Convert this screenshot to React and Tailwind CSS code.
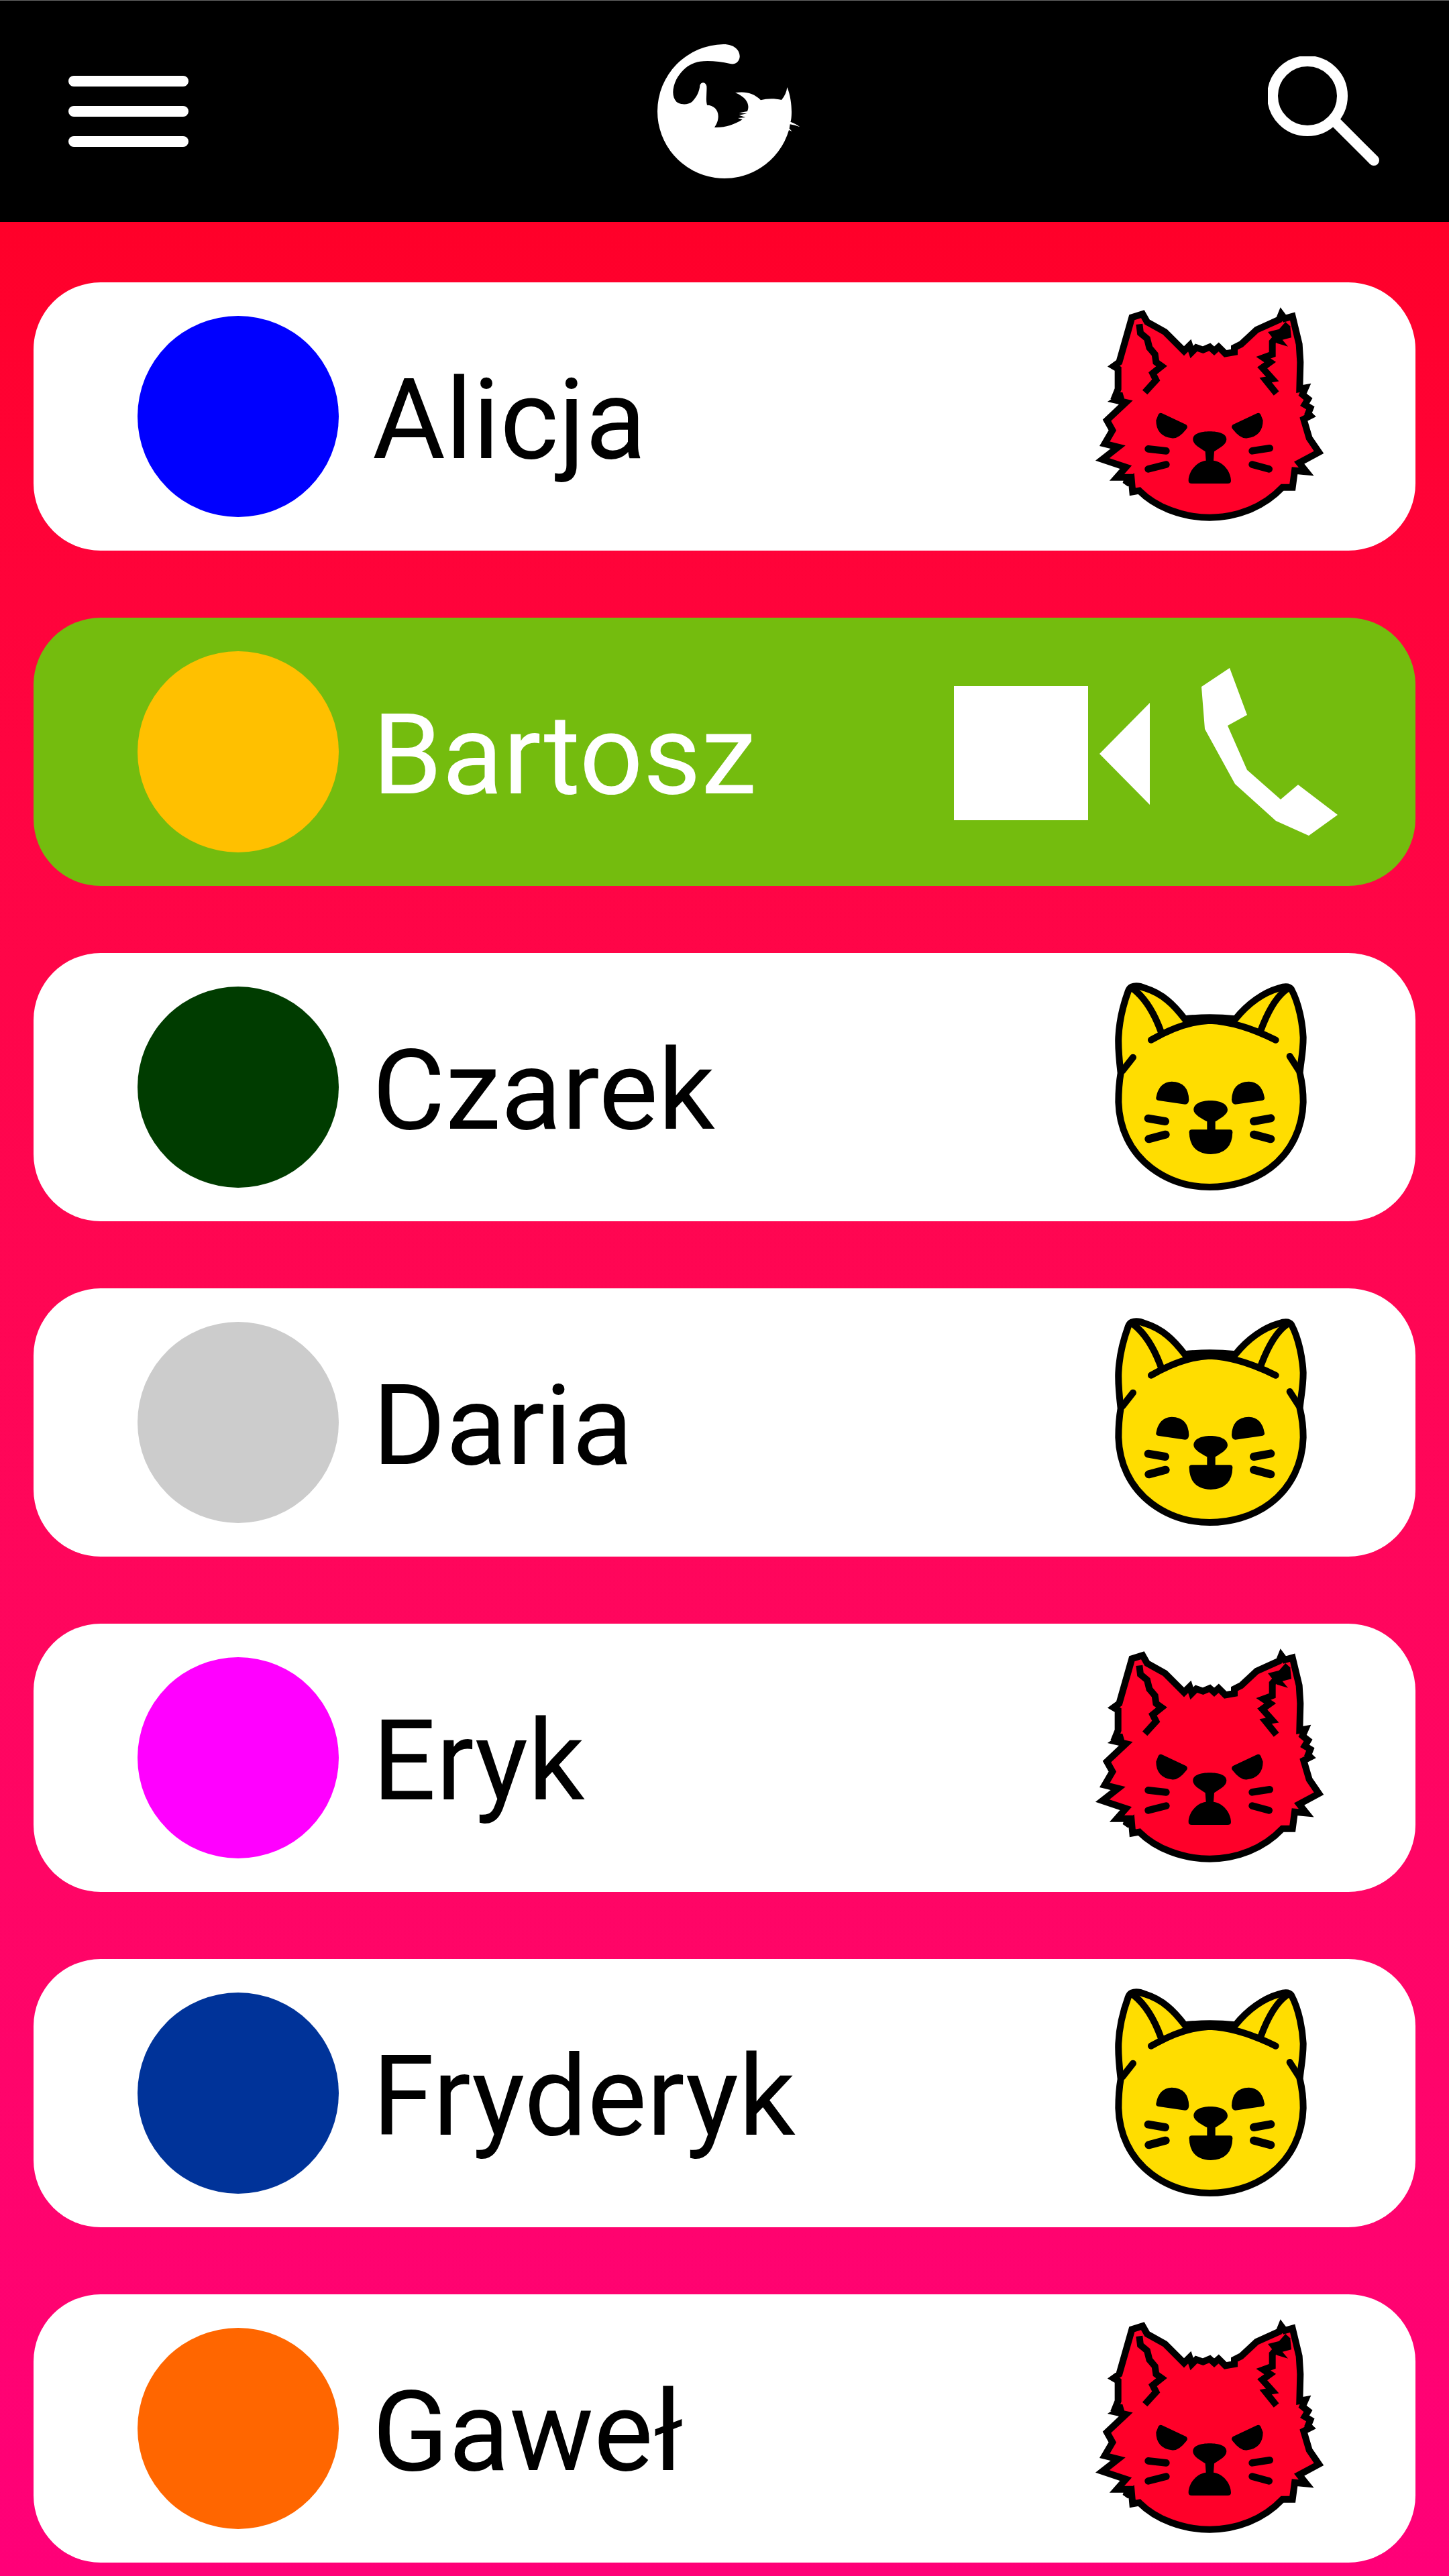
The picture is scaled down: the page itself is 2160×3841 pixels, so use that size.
const ROBOTO = "font-['Roboto',sans-serif]"

function Logo() {
  return (
    <svg viewBox="0 0 780 720" className="w-[260px] h-[240px] mb-[12px] mr-[11px] fill-white">
      <path d="M385 78C440 78 460 110 458 135C455 160 435 170 415 165C370 155 320 150 280 155C235 162 200 190 175 235C155 275 155 315 175 335C195 350 225 350 245 335C265 315 278 290 280 262C285 245 305 245 310 265C312 295 305 325 312 350C340 350 362 370 362 400C362 420 355 435 345 450C390 452 430 440 470 415L450 408L484 405L455 395L490 388L455 385L492 378C505 350 490 315 438 295C480 288 520 295 552 328C580 320 615 320 645 327C660 310 668 290 670 270C685 305 690 350 690 380C690 400 688 420 685 425C700 430 715 438 727 448C712 442 698 438 683 436L680 455L692 468L678 462A300 300 0 0 1 90 378A300 300 0 0 1 385 78Z" />
    </svg>
  )
}

function AngryCat() {
  return (
    <svg viewBox="0 0 1140 1080" className="ml-auto mr-[120px] mb-[2px] w-[380px] h-[360px] shrink-0">
      <path
        d="M232 100L280 85L300 120L380 165L465 250L490 225L500 255L520 235L550 245L580 232L600 250L620 232L650 262L690 255L690 235L720 220L790 155L890 110L900 85L915 105L950 95L980 220L985 300L982 420L1008 415L995 445L1020 465L1005 490L1030 505L1020 530L1030 540L1000 555L1025 640L1068 703L980 750L1012 790L960 785L950 860L905 860C820 950 700 995 580 995C460 995 340 950 265 875L235 880L230 825L205 845L215 815L165 815L205 770L100 735L170 680L110 665L145 605L120 560L205 480L160 470L190 450L158 450L170 420L170 330L150 318L175 300Z"
        fill="#ff0029"
        stroke="black"
        strokeWidth="30"
        strokeLinejoin="miter"
        strokeMiterlimit="3"
      />
      <path d="M265 130L270 170L300 195L310 235L335 265L340 300L365 318L325 350L340 380L290 435" fill="none" stroke="black" strokeWidth="30" />
      <path d="M930 130L860 210L860 265L820 280L850 300L815 325L860 375L830 380L878 440" fill="none" stroke="black" strokeWidth="30" />
      <path d="M900 150L940 140L945 190L905 200L930 230L880 215L840 165Z" fill="black" />
      <path d="M350 535Q355 522 370 530L475 580Q485 590 475 600Q440 645 410 640Q340 630 340 560Z" />
      <path d="M808 535Q803 522 788 530L683 580Q673 590 683 600Q718 645 748 640Q818 630 818 560Z" />
      <path d="M505 645C505 620 540 610 580 610C620 610 655 620 655 645C655 670 620 685 600 700L597 740C640 745 675 790 675 830Q675 843 660 843L500 843Q485 843 485 830C485 790 520 745 563 740L560 700C540 685 505 670 505 645Z" />
      <path d="M305 688L385 697M305 778L385 758M770 697L848 685M770 758L845 778" stroke="black" strokeWidth="32" strokeLinecap="round" />
    </svg>
  )
}

function HappyCat() {
  return (
    <svg viewBox="0 0 1020 1020" className="ml-auto mr-[130px] mb-[22px] w-[340px] h-[340px] shrink-0">
      <path
        d="M140 95Q165 85 200 100C280 125 330 175 378 238Q490 225 605 238C660 170 730 120 800 100Q840 85 855 105C890 170 905 260 908 320C908 390 895 440 893 480C905 530 908 570 908 610C905 720 860 830 760 905C680 965 580 990 490 990C400 990 310 965 230 905C130 830 85 720 82 610C82 560 85 520 92 480C85 420 80 370 82 320C85 250 105 170 125 115Q130 100 140 95Z"
        fill="#ffdd00"
        stroke="black"
        strokeWidth="30"
      />
      <g fill="none" stroke="black" strokeWidth="30" strokeLinecap="round">
        <path d="M228 332Q370 250 490 245Q620 250 785 332" />
        <path d="M150 105Q225 165 272 295M835 105Q770 150 718 290" />
        <path d="M147 410L100 470M848 405L890 470" />
      </g>
      <path d="M215 683L291 696M217 775L293 755M687 696L763 682M687 755L763 775" stroke="black" strokeWidth="36" strokeLinecap="round" />
      <path d="M250 590Q262 520 320 518Q395 520 397 600Q395 620 380 620L262 603Q248 600 250 590Z" />
      <path d="M735 590Q723 520 665 518Q590 520 588 600Q590 620 605 620L723 603Q737 600 735 590Z" />
      <path d="M418 645C418 618 450 603 493 603C536 603 570 618 570 645C570 665 535 685 515 697L515 735L478 735L478 697C455 685 418 665 418 645Z" />
      <path d="M398 745Q398 733 410 733L580 733Q592 733 592 745Q590 840 495 843Q400 840 398 745Z" />
    </svg>
  )
}

function CallIcons() {
  return (
    <div className="ml-auto mr-[115px] flex items-center gap-[77px] shrink-0">
      <svg viewBox="0 0 292 200" className="w-[292px] h-[200px] mt-[4px] fill-white">
        <rect width="200" height="200" />
        <polygon points="217,101 292,25 292,177" />
      </svg>
      <svg viewBox="391 36 204 250" className="w-[204px] h-[250px] fill-white">
        <polygon points="433,36 391,64 396,127 441,209 502,264 551,286 594,255 535,210 509,232 459,188 430,122 459,106" />
      </svg>
    </div>
  )
}

const CONTACTS = [
  { name: 'Alicja', color: 'bg-[#0000ff]', mood: 'angry' },
  { name: 'Bartosz', color: 'bg-[#ffc000]', active: true },
  { name: 'Czarek', color: 'bg-[#003c00]', mood: 'happy' },
  { name: 'Daria', color: 'bg-[#cccccc]', mood: 'happy' },
  { name: 'Eryk', color: 'bg-[#ff00ff]', mood: 'angry' },
  { name: 'Fryderyk', color: 'bg-[#003399]', mood: 'happy' },
  { name: 'Gaweł', color: 'bg-[#ff6600]', mood: 'angry' },
]

function ContactRow({ contact }) {
  return (
    <div className={`flex items-center h-[400px] rounded-[100px] pl-[155px] ${contact.active ? 'bg-[#74bc0e] text-white' : 'bg-white text-black'}`}>
      <div className={`w-[300px] h-[300px] rounded-full shrink-0 ${contact.color}`} />
      <span className={`ml-[50px] text-[167px] leading-none mt-[10px] ${ROBOTO}`}>{contact.name}</span>
      {contact.active ? <CallIcons /> : contact.mood === 'angry' ? <AngryCat /> : <HappyCat />}
    </div>
  )
}

export default function App() {
  return (
    <div className="w-[2160px] h-[3841px] flex flex-col overflow-hidden">
      <header className="h-[331px] shrink-0 bg-black border-t border-[#666666] flex items-center justify-between pl-[102px] pr-[100px]">
        <div className="flex flex-col gap-[29px] w-[179px]">
          <div className="h-[16px] rounded-full bg-white" />
          <div className="h-[16px] rounded-full bg-white" />
          <div className="h-[16px] rounded-full bg-white" />
        </div>
        <Logo />
        <svg viewBox="0 0 170 170" className="w-[170px] h-[170px] mt-[6px] fill-none stroke-white" strokeWidth="16" strokeLinecap="round">
          <circle cx="59" cy="59" r="52" />
          <path d="M102 99L158 155" />
        </svg>
      </header>
      <main className="flex-1 flex flex-col gap-[100px] px-[50px] pt-[90px] bg-gradient-to-b from-[#ff0029] to-[#ff0078]">
        {CONTACTS.map(c => <ContactRow key={c.name} contact={c} />)}
      </main>
    </div>
  )
}
